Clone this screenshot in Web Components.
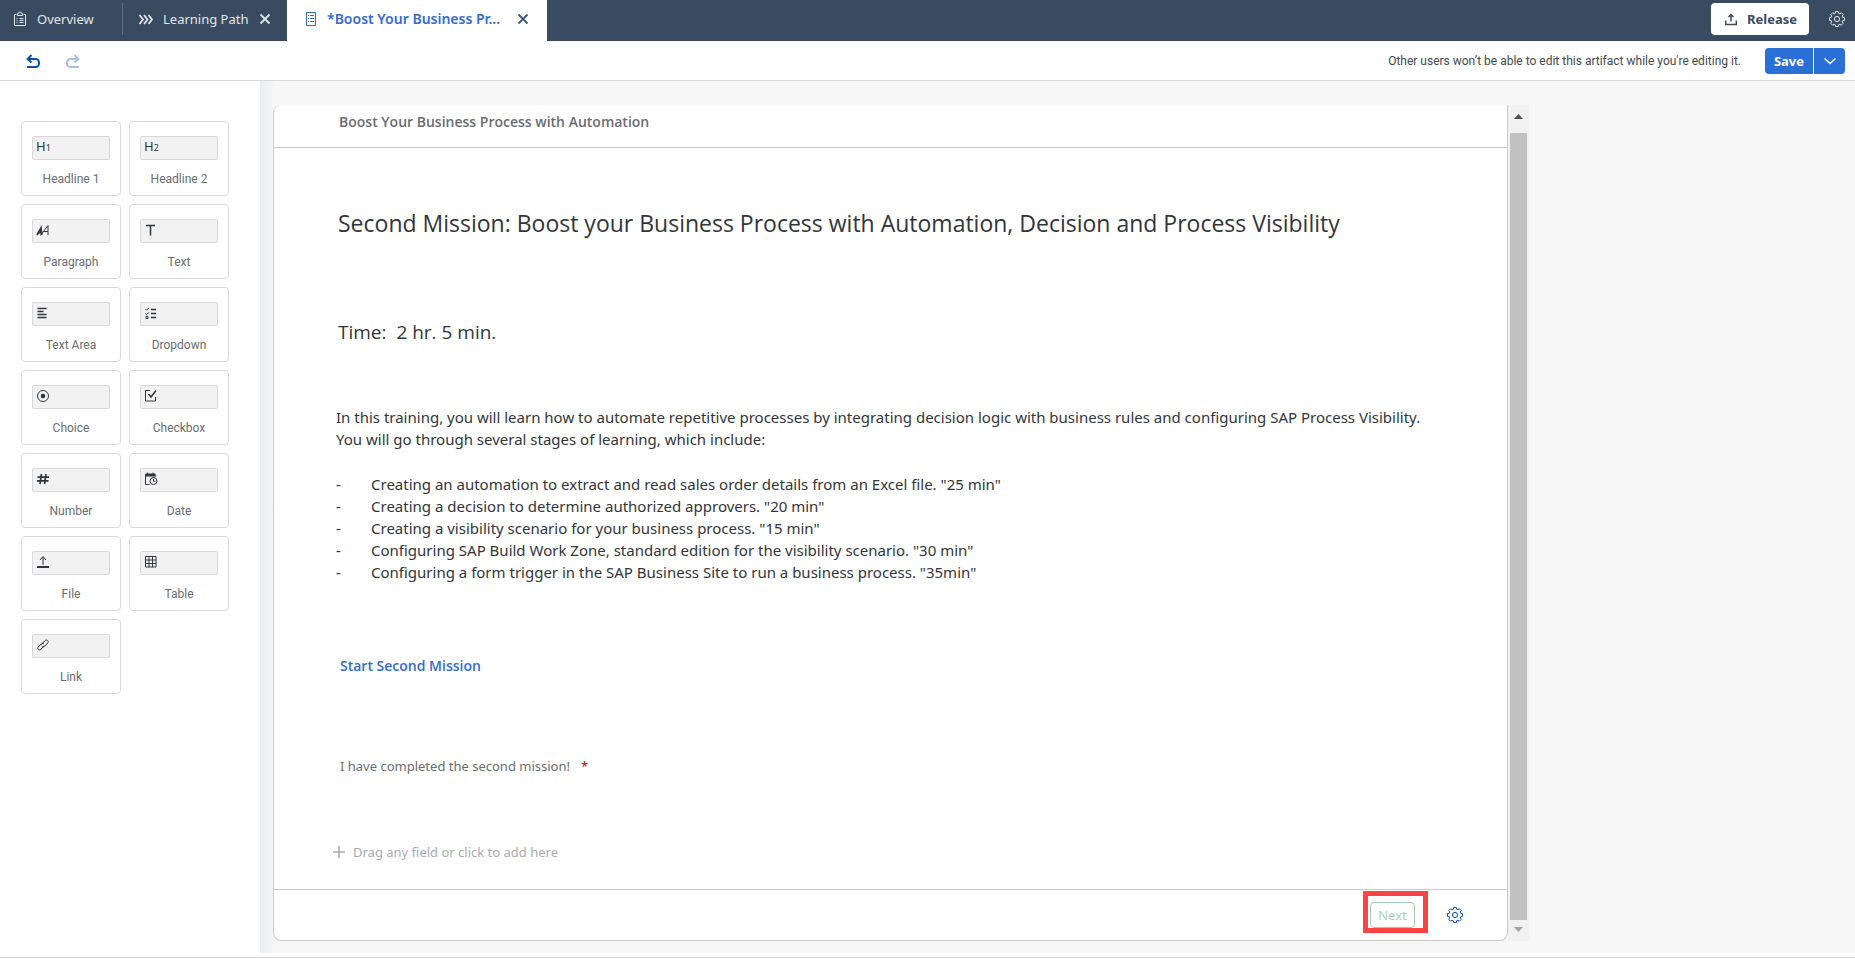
<!DOCTYPE html>
<html lang="en">
<head>
<meta charset="utf-8">
<title>Boost Your Business Process with Automation</title>
<style>
  html, body { margin: 0; height: 100%; }
  body { font-family: "Noto Sans", "Open Sans", sans-serif; font-size: 13px; color: #32363a; background: #fff; }
</style>
</head>
<body>
<form-builder-app></form-builder-app>

<template id="t-app">
  <style>
    :host { display: flex; flex-direction: column; height: 100vh; min-height: 760px; }
    .work { flex: 1; min-height: 0; display: flex; border-bottom: 4px solid #fff; box-sizing: border-box; }
    .status { height: 1px; background: #d9d9d9; }
  </style>
  <tab-strip></tab-strip>
  <edit-toolbar>Other users won’t be able to edit this artifact while you're editing it.</edit-toolbar>
  <div class="work">
    <field-palette></field-palette>
    <form-stage></form-stage>
  </div>
  <div class="status"></div>
</template>

<template id="t-tabs">
  <style>
    :host { display: flex; height: 41px; background: #394b61; color: #e2e5e8; }
    button { font: inherit; color: inherit; background: none; border: 0; padding: 0; cursor: pointer; }
    .tab { display: flex; align-items: center; height: 38px; }
    .tab > button:first-child { display: flex; align-items: center; gap: 9px; line-height: 20px; white-space: nowrap; }
    .close { display: flex; }
    .overview { width: 110px; padding-left: 12px; }
    .rule { width: 1px; height: 32px; margin-top: 3px; background: #5e6d80; }
    .path { width: 133px; padding-left: 15px; gap: 8px; padding-right: 16px; }
    .active { height: 41px; width: 260px; box-sizing: border-box; padding: 0 0 3px 16px; background: #fff; color: #346ad3; gap: 15px; font-weight: 600; font-size: 14px; }
    .tab.active > button:first-child { gap: 8px; }
    .active .close { color: #40597a; }
    .tools { margin-left: auto; display: flex; align-items: center; height: 38px; gap: 20px; padding-right: 10px; }
    .release { display: flex; align-items: center; gap: 8px; height: 32px; padding: 0 12px; border-radius: 4px; background: #fff; color: #394b61; font-weight: 700; }
    .gear { display: flex; }
  </style>
  <div class="tab overview"><button><ui-icon name="clipboard"></ui-icon>Overview</button></div>
  <div class="rule"></div>
  <div class="tab path"><button><ui-icon name="chevrons"></ui-icon>Learning Path</button><button class="close" aria-label="Close Learning Path"><ui-icon name="close"></ui-icon></button></div>
  <div class="tab active"><button><ui-icon name="form"></ui-icon>*Boost Your Business Pr...</button><button class="close" aria-label="Close form"><ui-icon name="close"></ui-icon></button></div>
  <div class="tools">
    <button class="release"><ui-icon name="share"></ui-icon>Release</button>
    <button class="gear" aria-label="Settings"><ui-icon name="gear"></ui-icon></button>
  </div>
</template>

<template id="t-toolbar">
  <style>
    :host { display: flex; align-items: center; height: 39px; background: #fff; border-bottom: 1px solid #d9d9d9; padding: 0 10px 0 25px; }
    button { font: inherit; border: 0; padding: 0; background: none; cursor: pointer; display: flex; align-items: center; justify-content: center; }
    .undo { color: #0a4ea6; }
    .redo { color: #a6bfe1; margin-left: 24px; }
    .note { margin-left: auto; font: 12px/16px Roboto, sans-serif; color: #45494d; }
    .split { display: flex; gap: 1px; margin-left: 24px; }
    .split button { height: 26px; color: #fff; background: #2a6fd6; font-weight: 700; }
    .save { width: 48px; border-radius: 4px 0 0 4px; }
    .more { width: 31px; border-radius: 0 4px 4px 0; }
  </style>
  <button class="undo" aria-label="Undo"><ui-icon name="undo"></ui-icon></button>
  <button class="redo" aria-label="Redo"><ui-icon name="redo"></ui-icon></button>
  <span class="note"><slot></slot></span>
  <div class="split"><button class="save">Save</button><button class="more" aria-label="More save options"><ui-icon name="down"></ui-icon></button></div>
</template>

<template id="t-palette">
  <style>
    :host { display: block; flex: none; width: 260px; box-sizing: border-box; padding: 40px 31px 0 21px; background: #fff; }
    .grid { display: grid; grid-template-columns: 1fr 1fr; gap: 8px; }
  </style>
  <div class="grid">
    <field-tile icon="h1">Headline 1</field-tile>
    <field-tile icon="h2">Headline 2</field-tile>
    <field-tile icon="para">Paragraph</field-tile>
    <field-tile icon="text">Text</field-tile>
    <field-tile icon="area">Text Area</field-tile>
    <field-tile icon="list">Dropdown</field-tile>
    <field-tile icon="radio">Choice</field-tile>
    <field-tile icon="check">Checkbox</field-tile>
    <field-tile icon="hash">Number</field-tile>
    <field-tile icon="date">Date</field-tile>
    <field-tile icon="upload">File</field-tile>
    <field-tile icon="table">Table</field-tile>
    <field-tile icon="link">Link</field-tile>
  </div>
</template>

<template id="t-tile">
  <style>
    :host { display: block; }
    button { display: flex; flex-direction: column; width: 100%; height: 75px; box-sizing: border-box; padding: 14px 10px 0; border: 1px solid #d9d9d9; border-radius: 4px; background: #fff; color: #6a6d70; font: 12px/16px Roboto, sans-serif; cursor: grab; }
    .box { display: flex; align-items: center; width: 100%; height: 24px; box-sizing: border-box; margin-bottom: 11px; padding: 0 0 2px 2px; border: 1px solid #d9d9d9; border-radius: 2px; background: #f2f2f2; color: #32363a; }
    .label { width: 100%; text-align: center; }
    .glyph { font: 13px/16px "Noto Sans", sans-serif; padding-left: 1px; }
    .glyph small { font-size: 9px; }
  </style>
  <button><span class="box"></span><span class="label"><slot></slot></span></button>
</template>

<template id="t-stage">
  <style>
    :host { flex: 1; min-width: 0; display: grid; grid-template-columns: minmax(0, 1fr) 21px 326px; padding: 24px 0 12px 13px; box-sizing: border-box; background: linear-gradient(90deg, #ebedef, #f7f7f7 16px); }
    .card { display: flex; flex-direction: column; min-height: 0; background: #fff; border: 1px solid #c9c9c9; border-top: 0; border-radius: 8px 0 8px 8px; }
    header { height: 43px; box-sizing: border-box; padding: 7px 65px 0; border-bottom: 1px solid #c9c9c9; }
    header h2 { margin: 0; font: 600 14px/20px "Open Sans", sans-serif; color: #6a6d70; }
    .body { flex: 1; min-height: 0; padding: 59px 62px 0; }
    .body h1 { margin: 0 2px 81px; font: 400 23px/32px "Open Sans", sans-serif; }
    .body h3 { margin: 0 2px 62px; font: 400 19px/24px "Open Sans", sans-serif; white-space: pre; }
    p { margin: 0; font-size: 15px; line-height: 22px; }
    ul { list-style: none; margin: 23px 0 73px; padding: 0; font-size: 15px; line-height: 22px; }
    li { display: grid; grid-template-columns: 35px 1fr; }
    .cta { display: block; width: max-content; margin-left: 4px; font: 600 14px/20px "Open Sans", sans-serif; color: #346ad3; text-decoration: none; }
    .done { margin: 80px 4px 66px; line-height: 20px; color: #6a6d70; display: flex; gap: 11px; }
    .done b { font-weight: 400; color: #b00; }
    .add { display: flex; align-items: center; gap: 6px; margin-left: -5px; padding: 0; border: 0; background: none; font: 13px/20px "Noto Sans", sans-serif; color: #a9abad; cursor: pointer; }
    footer { flex: none; display: flex; align-items: center; justify-content: flex-end; gap: 32px; height: 51px; box-sizing: border-box; padding-right: 44px; border-top: 1px solid #c9c9c9; }
    .hint { position: relative; }
    .hint::after { content: ""; position: absolute; inset: -11px -13px -5px -7px; border: 5px solid #ff4343; pointer-events: none; }
    .next { width: 45px; height: 26px; padding: 0; font: inherit; color: #aed3b6; background: #fff; border: 1px solid #a5cbae; border-radius: 4px; display: block; }
    .set { display: flex; border: 0; background: none; padding: 0; color: #0a4ea6; }
    .scroll { display: flex; flex-direction: column; align-items: center; background: #f1f1f1; }
    .scroll svg { display: block; flex: none; }
    .thumb { flex: 1; width: 17px; background: #c1c1c1; }
  </style>
  <section class="card">
    <header><h2>Boost Your Business Process with Automation</h2></header>
    <div class="body">
      <h1>Second Mission: Boost your Business Process with Automation, Decision and Process Visibility</h1>
      <h3>Time:  2 hr. 5 min.</h3>
      <p>In this training, you will learn how to automate repetitive processes by integrating decision logic with business rules and configuring SAP Process Visibility.<br>You will go through several stages of learning, which include:</p>
      <ul>
        <li><span>-</span><span>Creating an automation to extract and read sales order details from an Excel file. "25 min"</span></li>
        <li><span>-</span><span>Creating a decision to determine authorized approvers. "20 min"</span></li>
        <li><span>-</span><span>Creating a visibility scenario for your business process. "15 min"</span></li>
        <li><span>-</span><span>Configuring SAP Build Work Zone, standard edition for the visibility scenario. "30 min"</span></li>
        <li><span>-</span><span>Configuring a form trigger in the SAP Business Site to run a business process. "35min"</span></li>
      </ul>
      <a class="cta" href="#second-mission">Start Second Mission</a>
      <div class="done"><span>I have completed the second mission!</span><b>*</b></div>
      <button class="add"><ui-icon name="plus"></ui-icon>Drag any field or click to add here</button>
    </div>
    <footer>
      <span class="hint"><button class="next">Next</button></span>
      <button class="set" aria-label="Button settings"><ui-icon name="gear"></ui-icon></button>
    </footer>
  </section>
  <div class="scroll">
    <svg width="21" height="28"><path d="M6 14h9l-4.500-5z" fill="#505050"/></svg>
    <div class="thumb"></div>
    <svg width="21" height="21"><path d="M6 7h9l-4.500 5z" fill="#a3a3a3"/></svg>
  </div>
</template>

<script>
  const gearPath = (() => {
    const pts = [], p = (r, a) => (8 + r * Math.sin(a)).toFixed(2) + ' ' + (8 - r * Math.cos(a)).toFixed(2);
    for (let i = 0; i < 8; i++) {
      const a = i * Math.PI / 4;
      pts.push(p(6, a - .27), p(7.6, a - .19), p(7.6, a + .19), p(6, a + .27));
    }
    return 'M' + pts.join('L') + 'Z';
  })();

  const ICONS = {
    clipboard: '<path d="M4.500 3.500h-2v11h11v-11h-2M5.500 4.500v-2l1.500-.5.500-1h1l.5 1 1.500.5v2zM7.500 7.500h4M7.500 9.500h4M7.500 11.500h4M4.500 7.500h1M4.500 9.500h1M4.500 11.500h1"/>',
    chevrons: '<path stroke-width="1.800" d="M1.500 4l3.500 4.500-3.500 4.500M6 4l3.500 4.500-3.500 4.500M10.500 4l3.500 4.500-3.500 4.500"/>',
    close: '<path stroke-width="1.800" d="M3.500 3.500l9 9M12.500 3.500l-9 9"/>',
    form: '<path d="M3.500 1.500h9v13h-9zM5 4.500h1M7 4.500h4M5 7.500h1M7 7.500h4M5 10.500h1M7 10.500h4"/>',
    share: '<path stroke-width="1.500" d="M2.700 9.500v4h10.600v-4M8 10.500V4M5.500 6L8 3.500 10.500 6"/>',
    gear: `<path d="${gearPath}"/><circle cx="8" cy="8" r="2.600"/>`,
    undo: '<path stroke-width="2" d="M2 14h8.500a3.500 3.500 0 0 0 3.500-3.500v-1A3.500 3.500 0 0 0 10.500 6H3M6.500 2L2.600 6l3.900 3.500"/>',
    redo: '<path stroke-width="2" d="M14 14H5.500A3.500 3.500 0 0 1 2 10.500v-1A3.500 3.500 0 0 1 5.500 6H13M9.500 2l3.900 4-3.900 3.500"/>',
    down: '<path stroke-width="1.500" d="M2.500 5.500L8 10.500l5.500-5"/>',
    para: '<path stroke-width="1.800" d="M2 13l4-7 .5 7M3.500 10.500h4"/><path d="M5.500 13.500l7.500-10v9.500M8.500 9.500h4.500"/>',
    text: '<path stroke-width="1.500" d="M3 3.500h9M7.500 3.500v10"/>',
    area: '<path stroke-width="1.300" d="M2.500 3.500h9M2.500 6.500h6M2.500 9.500h9M2.500 12.500h9"/>',
    list: '<path d="M2.500 4l1.200 1.200L6 2.800M2.500 8.500l1.200 1.200L6 7.300M3 11.500h2v2H3z"/><path stroke-width="1.300" d="M8 4.500h5M8 8.500h5M8 12.500h5"/>',
    radio: '<circle cx="8" cy="8" r="5.500"/><circle cx="8" cy="8" r="2.300" fill="currentColor" stroke="none"/>',
    check: '<path d="M7 2.500H2.500v10.500H12.500V9"/><path stroke-width="1.500" d="M5.500 6l2.500 3 5-6.500"/>',
    hash: '<path stroke-width="1.700" d="M6.500 3l-1.500 10M11 3L9.500 13M2.500 6.200h11.500M2 9.800h11.500"/>',
    date: '<path d="M6.500 13.500H2.500V3.500h9.500V6M4.500 1.500v1.500M10 1.500v1.500"/><path stroke-width="3" d="M2.500 4H12.500"/><circle cx="10.500" cy="10" r="3.500"/><path d="M10.500 8v2.300H12.500"/>',
    upload: '<path d="M8 11V3M5 6l3-3.500L11 6"/><path stroke-width="2" d="M2 13h12"/>',
    table: '<path d="M2.500 2.500h10.500v10.500H2.500zM2.500 6h10.500M2.500 9.500h10.500M6 2.500v10.500M9.500 2.500v10.500"/>',
    link: '<path d="M6.500 7.500l3.700-4c1.700-1.500 4 .6 2.600 2.400L9.500 9.300c-1 .9-2.200.7-2.800-.2M9.300 8.500l-3.500 4c-1.700 1.500-4-.6-2.600-2.400L6.300 6.800c1-.9 2.200-.7 2.800.2"/>',
    plus: '<path stroke-width="1.600" d="M8 2v12M2 8h12"/>'
  };

  const define = (name, templateId, setup) => customElements.define(name, class extends HTMLElement {
    constructor() {
      super();
      this.attachShadow({ mode: 'open' }).append(document.getElementById(templateId).content.cloneNode(true));
    }
    connectedCallback() { if (setup) setup(this); }
  });

  customElements.define('ui-icon', class extends HTMLElement {
    connectedCallback() {
      if (this.shadowRoot) return;
      this.attachShadow({ mode: 'open' }).innerHTML =
        `<style>:host{display:inline-flex;flex:none}svg{display:block}</style>
         <svg width="16" height="16" viewBox="0 0 16 16" fill="none" stroke="currentColor" aria-hidden="true">${ICONS[this.getAttribute('name')]}</svg>`;
    }
  });
  define('field-tile', 't-tile', el => {
    const icon = el.getAttribute('icon');
    const level = /^h(\d)$/.exec(icon);
    el.shadowRoot.querySelector('.box').innerHTML = level
      ? `<span class="glyph">H<small>${level[1]}</small></span>`
      : `<ui-icon name="${icon}"></ui-icon>`;
  });
  define('tab-strip', 't-tabs');
  define('edit-toolbar', 't-toolbar');
  define('field-palette', 't-palette');
  define('form-stage', 't-stage');
  define('form-builder-app', 't-app');
</script>
</body>
</html>
